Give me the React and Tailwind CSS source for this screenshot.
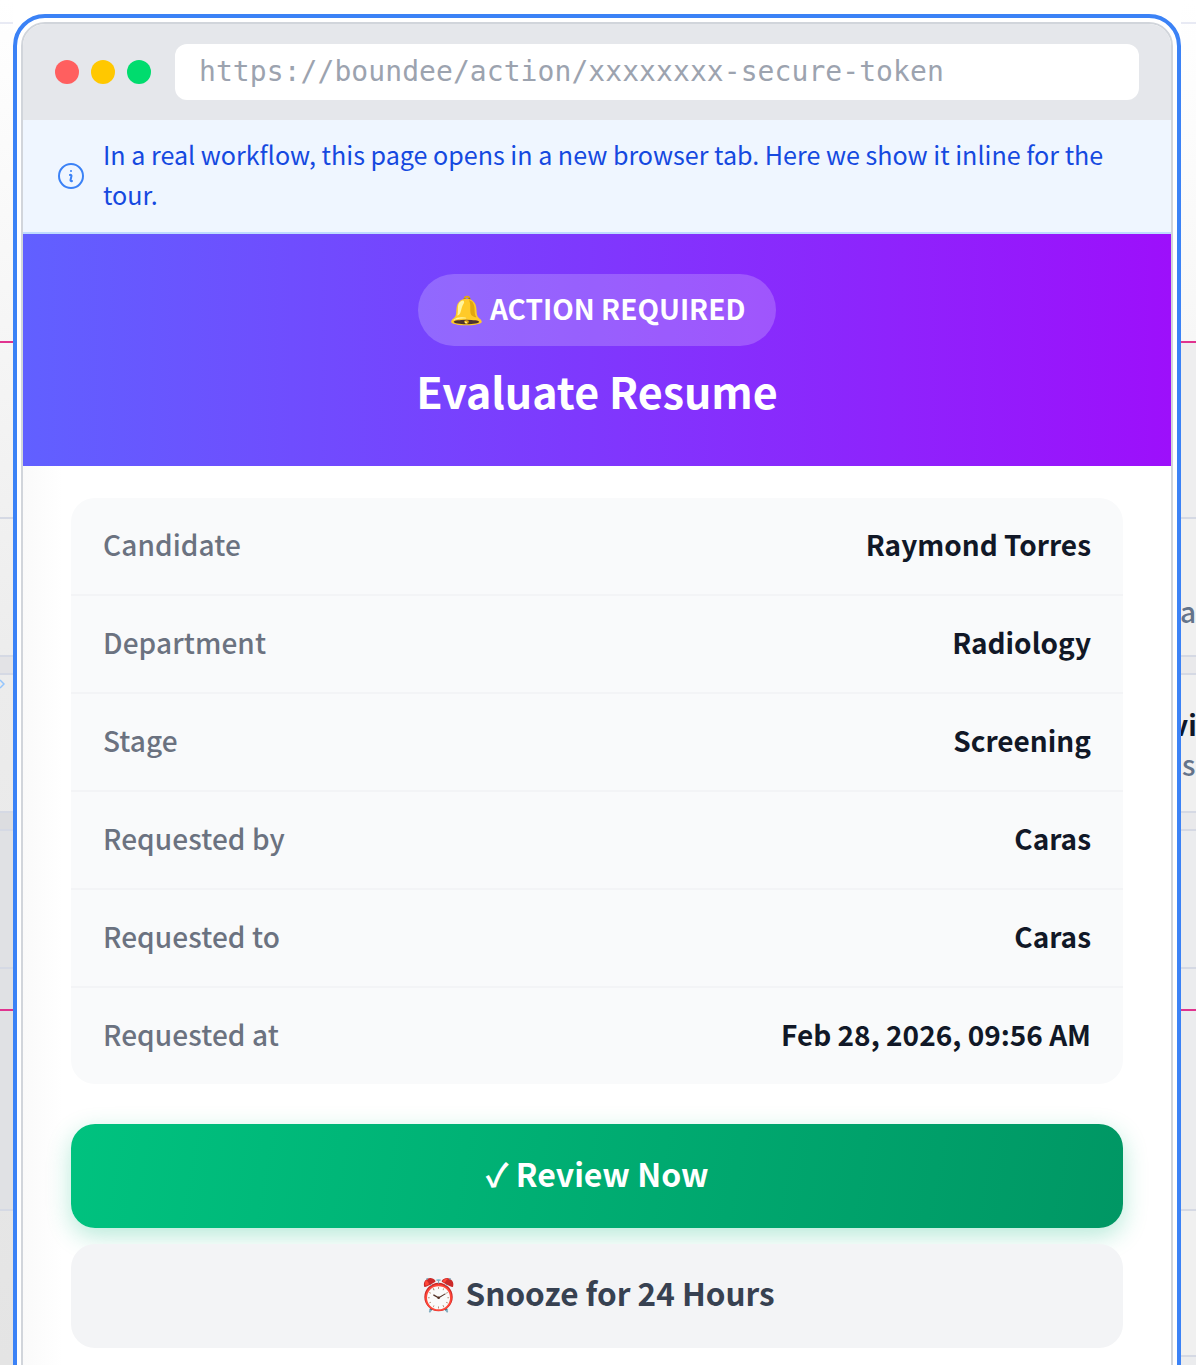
const sans = "font-['Noto_Sans_CJK_SC','Noto_Sans',sans-serif]";

const details = [
  { label: 'Candidate', value: 'Raymond Torres' },
  { label: 'Department', value: 'Radiology' },
  { label: 'Stage', value: 'Screening' },
  { label: 'Requested by', value: 'Caras' },
  { label: 'Requested to', value: 'Caras' },
  { label: 'Requested at', value: 'Feb 28, 2026, 09:56 AM' },
];

const InfoIcon = () => (
  <svg width="32" height="32" viewBox="0 0 24 24" fill="none" stroke="#3b82f6" strokeWidth="1.5" strokeLinecap="round" strokeLinejoin="round" className="shrink-0">
    <path d="m11.25 11.25.041-.02a.75.75 0 0 1 1.063.852l-.708 2.836a.75.75 0 0 0 1.063.853l.041-.021M21 12a9 9 0 1 1-18 0 9 9 0 0 1 18 0Zm-9-3.75h.008v.008H12V8.25Z" />
  </svg>
);

// slivers of the page behind the window
const LeftStrip = () => (
  <div className="w-[13px] shrink-0 flex flex-col bg-gradient-to-b from-[#ffffff] via-[#ececec] to-[#e4e4e4]">
    <div className="h-[24px] border-b-2 border-[#e8eaf4]" />
    <div className="h-[319px] border-b-2 border-[#e0338f]" />
    <div className="h-[176px] border-b-2 border-[#d5d9e4]" />
    <div className="h-[138px] border-b-2 border-[#d5d9e4]" />
    <div className="h-[18px] border-b-2 border-[#d5d9e4] bg-[#e3e3e6]" />
    <div className="h-[138px] border-b-2 border-[#d5d9e4] pt-[4px]">
      <svg width="5" height="10" viewBox="0 0 5 10" className="block">
        <path d="M0 1l4 4-4 4" fill="none" stroke="#93c5fd" strokeWidth="1.5" />
      </svg>
    </div>
    <div className="h-[18px] border-b-2 border-[#d5d9e4] bg-[#dcdde0]" />
    <div className="h-[138px] border-b-2 border-[#d5d9e4] bg-[#e0e1e4]" />
    <div className="h-[42px] border-b-2 border-[#e0338f] bg-[#e0e1e4]" />
    <div className="h-[200px] border-b-2 border-[#d5d9e4] bg-[#e0e1e4]" />
    <div className="flex-1" />
  </div>
);

const RightStrip = () => (
  <div className={`w-[15px] shrink-0 flex flex-col overflow-hidden bg-gradient-to-b from-[#ffffff] via-[#efefef] to-[#ededed] ${sans}`}>
    <div className="h-[24px] border-b-2 border-[#e8eaf4]" />
    <div className="h-[319px] border-b-2 border-[#e0338f]" />
    <div className="h-[176px] border-b-2 border-[#d5d9e4] bg-[#eeeeef]" />
    <div className="h-[138px] border-b-2 border-[#d5d9e4] bg-[#f0f0f0] pt-[72px] text-[28px] leading-[40px] font-medium text-[#64748b]">
      <span className="block ml-[-1px]">a</span>
    </div>
    <div className="h-[18px] border-b-2 border-[#d5d9e4] bg-[#e9e9eb]" />
    <div className="h-[138px] border-b-2 border-[#d5d9e4] bg-[#f0f0f0] pt-[29px] whitespace-nowrap">
      <span className="block ml-[-9px] text-[28px] leading-[40px] font-semibold text-[#0f172a]">vi</span>
      <span className="block ml-[1px] text-[28px] leading-[40px] font-medium text-[#64748b]">s</span>
    </div>
    <div className="h-[18px] border-b-2 border-[#d5d9e4] bg-[#e9e9eb]" />
    <div className="h-[138px] border-b-2 border-[#d5d9e4] bg-[#ebecee]" />
    <div className="h-[42px] border-b-2 border-[#e0338f] bg-[#ebecee]" />
    <div className="h-[200px] border-b-2 border-[#d5d9e4] bg-[#ebecee]" />
    <div className="h-[146px] border-b-2 border-[#d5d9e4] bg-[#f0f0f0]" />
    <div className="flex-1 bg-[#ebecee]" />
  </div>
);

const BrowserBar = () => (
  <div className="h-[96px] bg-[#e5e7eb] flex items-center px-[32px] gap-[24px]">
    <div className="flex gap-[12px]">
      <span className="w-[24px] h-[24px] rounded-full bg-[#ff5f5f]" />
      <span className="w-[24px] h-[24px] rounded-full bg-[#ffc800]" />
      <span className="w-[24px] h-[24px] rounded-full bg-[#00dc6e]" />
    </div>
    <div className="flex-1 h-[56px] bg-white rounded-[12px] pl-[24px] flex items-center font-['DejaVu_Sans_Mono',monospace] text-[28px] tracking-[0.07px] text-[#9ca3af]">
      https://boundee/action/xxxxxxxx-secure-token
    </div>
  </div>
);

export default function App() {
  return (
    <div className="h-screen overflow-hidden flex bg-white">
      <LeftStrip />
      <div className="w-[1168px] shrink-0 mt-[14px] h-[1500px] border-4 border-[#3b82f6] rounded-[32px] p-[4px] bg-white">
        <div className={`h-full border-2 border-[#d1d5db] rounded-[24px] overflow-hidden bg-[linear-gradient(to_right,#fafafa,#ffffff_40px)] ${sans}`}>
          <BrowserBar />

          <div className="flex items-center gap-[16px] px-[32px] py-[16px] bg-[#eff6ff] border-b-2 border-[#bfdbfe] text-[25.08px] leading-[40px] text-[#1549e0]">
            <InfoIcon />
            <p className="-mt-[2px] mb-[2px]">In a real workflow, this page opens in a new browser tab. Here we show it inline for the tour.</p>
          </div>

          <div className="h-[232px] pt-[40px] flex flex-col items-center bg-[linear-gradient(90deg,#6160ff,#9d0ffb)] text-white">
            <div className="h-[72px] w-[358px] rounded-full bg-white/20 flex items-center justify-center text-[28px] font-semibold">
              <span className="-mt-[4px]">🔔 ACTION REQUIRED</span>
            </div>
            <h1 className="mt-[13px] text-[43px] leading-[62px] font-bold">Evaluate Resume</h1>
          </div>

          <div className="px-[48px] pt-[32px]">
            <div className="bg-[#f9fafb] rounded-[24px] overflow-hidden">
              {details.map((row, i) => (
                <div
                  key={row.label}
                  className={`px-[32px] flex items-center justify-between text-[28px] ${i < details.length - 1 ? 'h-[98px] pb-[4px] border-b-2 border-[#f3f4f6]' : 'h-[96px] pb-[4px]'}`}
                >
                  <span className="font-medium tracking-[0.1px] text-[#6b7280]">{row.label}</span>
                  <span className="font-semibold text-[#111827]">{row.value}</span>
                </div>
              ))}
            </div>

            <button className="mt-[40px] w-full h-[104px] pb-[6px] rounded-[24px] bg-[linear-gradient(100deg,#00c27f,#009764)] shadow-[0_8px_24px_rgba(16,185,129,0.3)] text-white text-[32px] font-bold">
              ✓ Review Now
            </button>
            <button className="mt-[16px] w-full h-[104px] pb-[6px] rounded-[24px] bg-[#f3f4f6] text-[#374151] text-[31.5px] font-semibold">
              ⏰ Snooze for 24 Hours
            </button>
          </div>
        </div>
      </div>
      <RightStrip />
    </div>
  );
}
